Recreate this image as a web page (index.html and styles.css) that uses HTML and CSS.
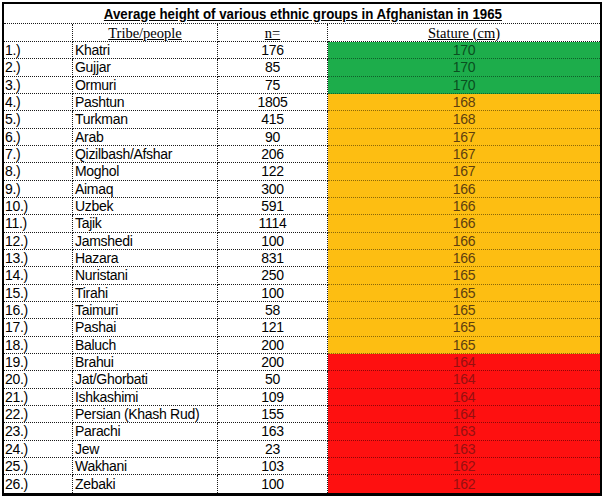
FILE: index.html
```html
<!DOCTYPE html>
<html>
<head>
<meta charset="utf-8">
<link rel="stylesheet" href="styles.css">
</head>
<body>
<table class="sheet">
  <colgroup>
    <col class="c-num"><col class="c-name"><col class="c-n"><col class="c-st">
  </colgroup>
  <tr class="title-row"><td colspan="4" class="title"><span>Average height of various ethnic groups in Afghanistan in 1965</span></td></tr>
  <tr class="head-row"><td></td><td class="head"><span>Tribe/people</span></td><td class="head"><span>n=</span></td><td class="head last"><span>Stature (cm)</span></td></tr>
  <tr><td class="num">1.)</td><td class="name">Khatri</td><td class="n">176</td><td class="st green">170</td></tr>
  <tr><td class="num">2.)</td><td class="name">Gujjar</td><td class="n">85</td><td class="st green">170</td></tr>
  <tr><td class="num">3.)</td><td class="name">Ormuri</td><td class="n">75</td><td class="st green">170</td></tr>
  <tr><td class="num">4.)</td><td class="name">Pashtun</td><td class="n">1805</td><td class="st orange">168</td></tr>
  <tr><td class="num">5.)</td><td class="name">Turkman</td><td class="n">415</td><td class="st orange">168</td></tr>
  <tr><td class="num">6.)</td><td class="name">Arab</td><td class="n">90</td><td class="st orange">167</td></tr>
  <tr><td class="num">7.)</td><td class="name">Qizilbash/Afshar</td><td class="n">206</td><td class="st orange">167</td></tr>
  <tr><td class="num">8.)</td><td class="name">Moghol</td><td class="n">122</td><td class="st orange">167</td></tr>
  <tr><td class="num">9.)</td><td class="name">Aimaq</td><td class="n">300</td><td class="st orange">166</td></tr>
  <tr><td class="num">10.)</td><td class="name">Uzbek</td><td class="n">591</td><td class="st orange">166</td></tr>
  <tr><td class="num">11.)</td><td class="name">Tajik</td><td class="n">1114</td><td class="st orange">166</td></tr>
  <tr><td class="num">12.)</td><td class="name">Jamshedi</td><td class="n">100</td><td class="st orange">166</td></tr>
  <tr><td class="num">13.)</td><td class="name">Hazara</td><td class="n">831</td><td class="st orange">166</td></tr>
  <tr><td class="num">14.)</td><td class="name">Nuristani</td><td class="n">250</td><td class="st orange">165</td></tr>
  <tr><td class="num">15.)</td><td class="name">Tirahi</td><td class="n">100</td><td class="st orange">165</td></tr>
  <tr><td class="num">16.)</td><td class="name">Taimuri</td><td class="n">58</td><td class="st orange">165</td></tr>
  <tr><td class="num">17.)</td><td class="name">Pashai</td><td class="n">121</td><td class="st orange">165</td></tr>
  <tr><td class="num">18.)</td><td class="name">Baluch</td><td class="n">200</td><td class="st orange">165</td></tr>
  <tr><td class="num">19.)</td><td class="name">Brahui</td><td class="n">200</td><td class="st red">164</td></tr>
  <tr><td class="num">20.)</td><td class="name">Jat/Ghorbati</td><td class="n">50</td><td class="st red">164</td></tr>
  <tr><td class="num">21.)</td><td class="name">Ishkashimi</td><td class="n">109</td><td class="st red">164</td></tr>
  <tr><td class="num">22.)</td><td class="name">Persian (Khash Rud)</td><td class="n">155</td><td class="st red">164</td></tr>
  <tr><td class="num">23.)</td><td class="name">Parachi</td><td class="n">163</td><td class="st red">163</td></tr>
  <tr><td class="num">24.)</td><td class="name">Jew</td><td class="n">23</td><td class="st red">163</td></tr>
  <tr><td class="num">25.)</td><td class="name">Wakhani</td><td class="n">103</td><td class="st red">162</td></tr>
  <tr class="final"><td class="num">26.)</td><td class="name">Zebaki</td><td class="n">100</td><td class="st red">162</td></tr>
</table>
</body>
</html>
```
FILE: styles.css
```css
html, body {
  margin: 0;
  padding: 0;
  background: #ffffff;
}

.sheet {
  margin: 2px 0 0 2px;
  width: 600px;
  border: 2px solid #000;
  border-bottom-width: 3px;
  border-spacing: 0;
  border-collapse: separate;
  table-layout: fixed;
  font-family: "Liberation Sans", Arial, sans-serif;
  font-size: 14px;
  letter-spacing: -0.3px;
  color: #000;
}

.c-num { width: 69px; }
.c-name { width: 145px; }
.c-n { width: 110px; }
.c-st { width: 272px; }

.sheet td {
  height: 17.33px;
  padding: 0;
  line-height: 16px;
  border-right: 1px dotted #1a1a1a;
  border-bottom: 1px dotted #1a1a1a;
  white-space: nowrap;
  overflow: hidden;
  box-sizing: border-box;
}

.sheet td:last-child {
  border-right: none;
}

.sheet tr.final td {
  border-bottom: none;
}

.title-row td.title {
  height: 20px;
  text-align: center;
  font-weight: bold;
  font-size: 15px;
  letter-spacing: 0;
  padding-left: 2px;
}

.title span {
  display: inline-block;
  text-decoration: underline;
  transform: scaleX(0.885);
  transform-origin: center;
  margin: 0 -30px;
}

.head-row td {
  height: 18px;
}

.head {
  text-align: center;
  font-family: "Liberation Serif", "Times New Roman", serif;
  font-size: 14.5px;
  letter-spacing: 0;
  text-decoration: underline;
}

.num {
  padding-left: 1px !important;
}

.name {
  padding-left: 2px !important;
}

.n {
  text-align: center;
}

.st {
  text-align: center;
}

.green {
  background: #1dad4b;
  color: #0a4f20;
}

.orange {
  background: #fdbe12;
  color: #5e3f10;
}

.red {
  background: #fe1010;
  color: #961010;
}

.sheet td.green,
.sheet td.orange,
.sheet td.red {
  border-bottom-color: rgba(0, 0, 0, 0.45);
}
```
